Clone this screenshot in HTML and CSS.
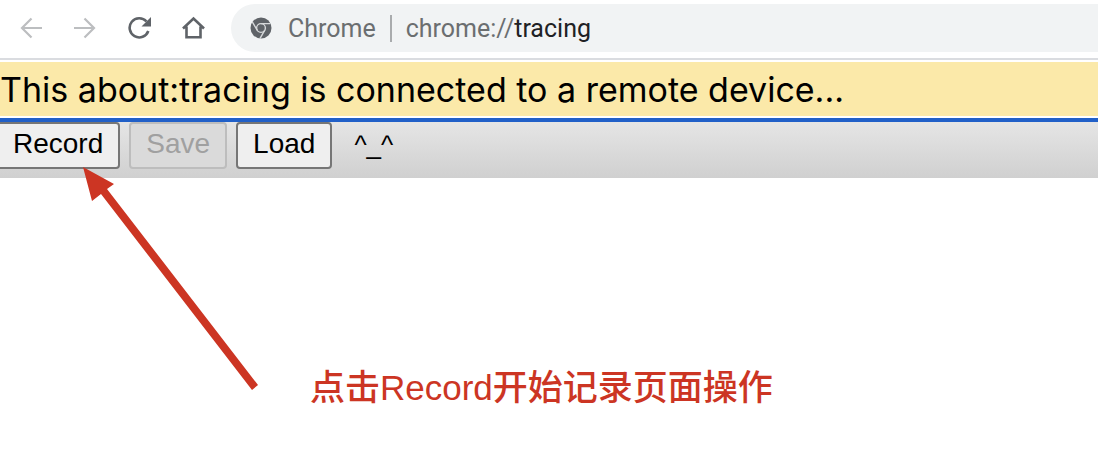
FILE: index.html
```html
<!DOCTYPE html>
<html lang="zh-CN">
  <head>
    <meta charset="UTF-8" />
    <meta name="viewport" content="width=device-width, initial-scale=1.0" />
    <title>chrome://tracing</title>
    <link rel="stylesheet" href="styles.css">
  </head>
  <body>
    <header class="browser-bar">
      <nav class="nav-buttons">
        <button class="nav-btn" aria-label="Back" disabled>
          <svg viewBox="0 0 24 24"><path d="M22 12H2M11.500 2.500L2 12l9.500 9.500" /></svg>
        </button>
        <button class="nav-btn" aria-label="Forward" disabled>
          <svg viewBox="0 0 24 24"><path d="M0 12h20M10.500 2.500L20 12l-9.500 9.500" /></svg>
        </button>
        <button class="nav-btn" aria-label="Reload">
          <svg viewBox="0 0 24 24">
            <path class="thick" d="M18.500 5.500A9.600 9.600 0 1 0 20.300 15" />
            <path class="solid" d="M23 1v9.500H13.500z" />
          </svg>
        </button>
        <button class="nav-btn" aria-label="Home">
          <svg viewBox="0 0 24 24"><path class="thick" d="M1 12.500L11.500 2.500l10.500 10M4.500 10.500v10.700h14V10.500" /></svg>
        </button>
      </nav>
      <div class="address-bar">
        <svg class="chrome-icon" viewBox="0 0 22 22">
          <circle class="disc" cx="11" cy="11" r="10.500" />
          <circle class="ring" cx="11" cy="11" r="4.400" />
          <path class="ring" d="M11 6.600h9.600M7.200 13.200L2.300 4.900M14.800 13.200l-4.900 8.500" />
        </svg>
        <span class="site-name">Chrome</span>
        <span class="divider"></span>
        <span class="url">chrome://<span class="host">tracing</span></span>
      </div>
    </header>

    <div class="banner">This about:tracing is connected to a remote device...</div>

    <div class="toolbar">
      <button class="tool-btn">Record</button>
      <button class="tool-btn" disabled>Save</button>
      <button class="tool-btn">Load</button>
      <span class="face">^_^</span>
    </div>

    <main class="content">
      <svg class="arrow" viewBox="0 0 176 224" aria-hidden="true">
        <path d="M0 0L31 17L24 22L175 218L169 223L18 27L9 34z" />
      </svg>
      <p class="note">点击Record开始记录页面操作</p>
    </main>
  </body>
</html>
```

FILE: styles.css
```css
* {
  box-sizing: border-box;
}

body {
  margin: 0;
  background: #fff;
  font-family: "Liberation Sans", "Noto Sans CJK SC", sans-serif;
}

.browser-bar {
  display: flex;
  align-items: center;
  gap: 25px;
  padding: 4px 0 6px 20px;
  border-bottom: 2px solid #dadce0;
}

.nav-buttons {
  display: flex;
  gap: 30px;
}

.nav-btn {
  width: 24px;
  height: 24px;
  padding: 0;
  border: none;
  background: none;
}

.nav-btn svg {
  display: block;
  width: 24px;
  height: 24px;
  fill: none;
  stroke: #5f6368;
  stroke-width: 2.2;
}

.nav-btn:disabled svg {
  stroke: #bcbec0;
}

.nav-btn .thick {
  stroke-width: 2.6;
}

.nav-btn .solid {
  fill: #5f6368;
  stroke: none;
}

.address-bar {
  display: flex;
  flex: 1;
  align-items: center;
  height: 48px;
  padding-left: 19px;
  border-radius: 24px 0 0 24px;
  background: #f1f3f4;
  color: #6b6e70;
  font-family: Roboto, sans-serif;
  font-size: 25px;
}

.chrome-icon {
  width: 22px;
  height: 22px;
  margin-right: 16px;
}

.chrome-icon .disc {
  fill: #5f6368;
}

.chrome-icon .ring {
  fill: none;
  stroke: #d6d8da;
  stroke-width: 1.4;
}

.divider {
  width: 2px;
  height: 27px;
  margin: 0 14px;
  background: #a9abad;
}

.host {
  color: #202124;
}

.banner {
  margin: 2px 0;
  padding: 2px 0 0;
  background: #fbe9a9;
  color: #000;
  font-family: Inter, sans-serif;
  font-size: 34px;
  line-height: 52px;
}

.toolbar {
  display: flex;
  align-items: flex-start;
  gap: 9px;
  height: 60px;
  border-top: 4px solid #2160c8;
  background: linear-gradient(#e5e5e5, #d0d0d0);
}

.tool-btn {
  height: 47px;
  padding: 0 15px 3px;
  border: 2px solid #767676;
  border-radius: 4px;
  background: #efefef;
  color: #000;
  font-family: inherit;
  font-size: 28px;
}

.tool-btn:first-child {
  margin-left: -4px;
}

.tool-btn:disabled {
  border-color: #bdbdbd;
  background: #dadada;
  color: #a0a0a0;
}

.face {
  margin-left: 13px;
  font-size: 26px;
  line-height: 47px;
}

.content {
  position: relative;
  padding: 184px 0 0 310px;
}

/* points up at the Record button, over the toolbar */
.arrow {
  position: absolute;
  top: -11px;
  left: 83px;
  width: 176px;
  height: 224px;
  fill: #cc3523;
}

.note {
  margin: 0;
  color: #cc3523;
  font-size: 35px;
  font-weight: 500;
  line-height: 52px;
}
```
